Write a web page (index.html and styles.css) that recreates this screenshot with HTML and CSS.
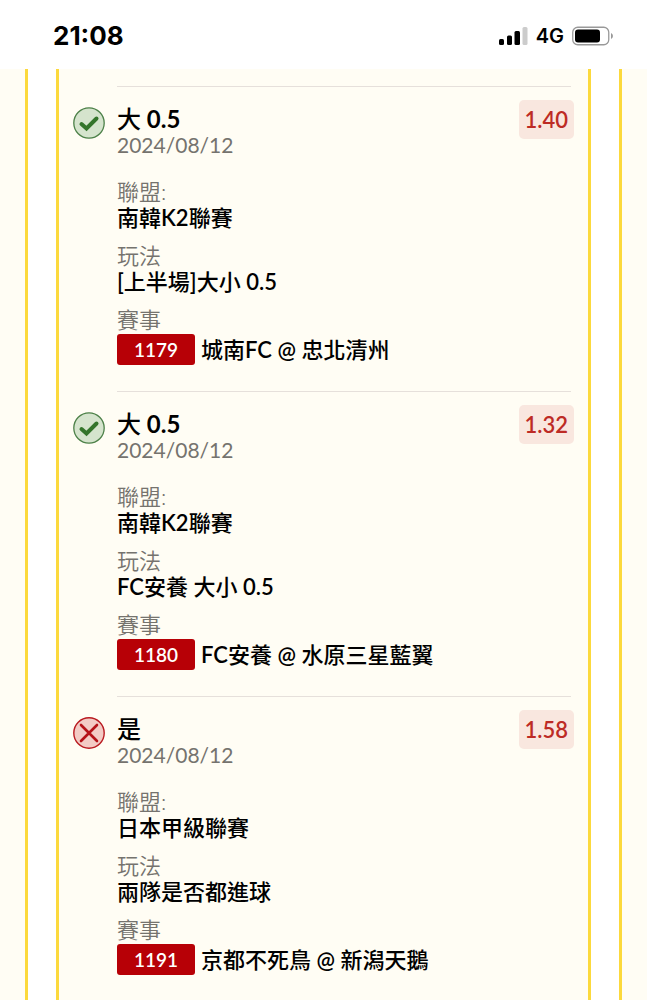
FILE: index.html
```
<!DOCTYPE html>
<html lang="zh-Hant">
<head>
    <meta charset="UTF-8">
    <meta name="viewport" content="width=device-width, initial-scale=1.0">
    <title>投注紀錄</title>
    <link rel="stylesheet" href="styles.css">
</head>
<body>
    <header class="status-bar">
        <span class="clock">21:08</span>
        <div class="status-icons">
            <svg class="signal" viewBox="0 0 29 18" aria-hidden="true">
                <rect x="0" y="12" width="5" height="6" rx="1.5"/>
                <rect x="8" y="8.5" width="5" height="9.5" rx="1.5"/>
                <rect x="15.5" y="4" width="5.5" height="14" rx="1.5"/>
                <rect x="23.5" y="0" width="5" height="18" rx="1.5" fill="#ccc"/>
            </svg>
            <span class="network">4G</span>
            <svg class="battery" viewBox="0 0 41 20" aria-hidden="true">
                <rect x="0.75" y="1.25" width="36" height="17.5" rx="5" fill="none" stroke="#999" stroke-width="1.3"/>
                <rect x="3" y="3.5" width="25" height="13" rx="3"/>
                <path d="M39 7 Q41 8 41 10 Q41 12 39 13 Z" fill="#999"/>
            </svg>
        </div>
    </header>

    <div class="page">
        <div class="outer-card">
            <main class="slip">
                <article class="bet">
                    <svg class="result" viewBox="0 0 32 32" role="img" aria-label="贏">
                        <circle cx="16" cy="16" r="15.2" fill="#d5e4cd" stroke="#4c8048" stroke-width="1.3"/>
                        <path d="M8.5 17 L13.5 21.5 L23.5 11.5" fill="none" stroke="#34752b" stroke-width="4" stroke-linecap="round" stroke-linejoin="miter"/>
                    </svg>
                    <div class="bet-body">
                        <div class="bet-head">
                            <div>
                                <h2>大<b> 0.5</b></h2>
                                <time datetime="2024-08-12">2024/08/12</time>
                            </div>
                            <span class="odds">1.40</span>
                        </div>
                        <dl>
                            <div class="field"><dt>聯盟:</dt><dd>南韓<b>K2</b>聯賽</dd></div>
                            <div class="field"><dt>玩法</dt><dd><b>[</b>上半場<b>]</b>大小<b> 0.5</b></dd></div>
                            <div class="field"><dt>賽事</dt><dd class="match"><span class="match-no">1179</span><span>城南<b>FC @ </b>忠北清州</span></dd></div>
                        </dl>
                    </div>
                </article>

                <article class="bet">
                    <svg class="result" viewBox="0 0 32 32" role="img" aria-label="贏">
                        <circle cx="16" cy="16" r="15.2" fill="#d5e4cd" stroke="#4c8048" stroke-width="1.3"/>
                        <path d="M8.5 17 L13.5 21.5 L23.5 11.5" fill="none" stroke="#34752b" stroke-width="4" stroke-linecap="round" stroke-linejoin="miter"/>
                    </svg>
                    <div class="bet-body">
                        <div class="bet-head">
                            <div>
                                <h2>大<b> 0.5</b></h2>
                                <time datetime="2024-08-12">2024/08/12</time>
                            </div>
                            <span class="odds">1.32</span>
                        </div>
                        <dl>
                            <div class="field"><dt>聯盟:</dt><dd>南韓<b>K2</b>聯賽</dd></div>
                            <div class="field"><dt>玩法</dt><dd><b>FC</b>安養 大小<b> 0.5</b></dd></div>
                            <div class="field"><dt>賽事</dt><dd class="match"><span class="match-no">1180</span><span><b>FC</b>安養<b> @ </b>水原三星藍翼</span></dd></div>
                        </dl>
                    </div>
                </article>

                <article class="bet">
                    <svg class="result" viewBox="0 0 32 32" role="img" aria-label="輸">
                        <circle cx="16" cy="16" r="15.2" fill="#f3cbc5" stroke="#b91a20" stroke-width="1.4"/>
                        <path d="M8 8 L24 24 M24 8 L8 24" fill="none" stroke="#b51218" stroke-width="2.6" stroke-linecap="round"/>
                    </svg>
                    <div class="bet-body">
                        <div class="bet-head">
                            <div>
                                <h2>是</h2>
                                <time datetime="2024-08-12">2024/08/12</time>
                            </div>
                            <span class="odds">1.58</span>
                        </div>
                        <dl>
                            <div class="field"><dt>聯盟:</dt><dd>日本甲級聯賽</dd></div>
                            <div class="field"><dt>玩法</dt><dd>兩隊是否都進球</dd></div>
                            <div class="field"><dt>賽事</dt><dd class="match"><span class="match-no">1191</span><span>京都不死鳥<b> @ </b>新潟天鵝</span></dd></div>
                        </dl>
                    </div>
                </article>
            </main>
        </div>
    </div>
</body>
</html>
```
FILE: styles.css
```
* {
    box-sizing: border-box;
}
body {
    margin: 0;
    min-height: 100vh;
    display: flex;
    flex-direction: column;
    background: #fff;
    color: #000;
    font-family: Lato, "Noto Sans CJK TC", sans-serif;
    font-size: 22px;
    line-height: 26px;
}
.status-bar {
    display: flex;
    align-items: center;
    justify-content: space-between;
    height: 69px;
    padding: 2px 34px 0 53px;
    font-family: Inter, sans-serif;
}
.clock {
    font-size: 26px;
    font-weight: 700;
}
.status-icons {
    display: flex;
    align-items: center;
    gap: 8px;
}
.signal {
    width: 29px;
    height: 18px;
}
.network {
    font-size: 20px;
    font-weight: 600;
}
.battery {
    width: 41px;
    height: 20px;
}
.page {
    flex: 1;
    display: flex;
    padding: 0 25px;
    background: #fffdf4;
}
.outer-card {
    flex: 1;
    display: flex;
    padding: 0 28px;
    background: #fff;
    border: solid #fcd93c;
    border-width: 0 3px;
}
.slip {
    flex: 1;
    padding: 17px 17px 0 14px;
    background: #fffdf4;
    border: solid #fcd93c;
    border-width: 0 3px;
}
.bet {
    display: flex;
    gap: 12px;
}
.result {
    flex: none;
    width: 32px;
    height: 32px;
    margin-top: 21px;
}
.bet-body {
    flex: 1;
    padding: 19px 0 26px;
    border-top: 1px solid #e6e0db;
}
.bet:last-child .bet-body {
    padding-bottom: 24px;
}
.bet-head {
    display: flex;
    justify-content: space-between;
    align-items: flex-start;
    margin-bottom: 21px;
}
h2 {
    margin: 0;
    font-size: 24px;
    font-weight: 500;
    line-height: 26px;
}
/* Latin runs, one step heavier than the Chinese around them */
b {
    font-weight: 600;
}
h2 b {
    font-weight: 700;
}
time {
    display: block;
    color: #75736e;
    font-size: 21px;
}
.odds {
    margin: -6px -3px 0 0;
    padding: 7px 6px 6px;
    border-radius: 5px;
    background: #f9e7df;
    color: #bd2b25;
    font-weight: 600;
}
dl {
    display: grid;
    gap: 12px;
    margin: 0;
}
dt {
    color: #75736e;
    font-weight: 350;
}
dd {
    margin: 0;
    font-weight: 500;
}
.match {
    display: flex;
    align-items: center;
    gap: 6px;
    padding-top: 1px;
    min-height: 32px;
}
.match-no {
    width: 78px;
    border-radius: 3px;
    background: #b70006;
    color: #fff;
    font-size: 19px;
    font-weight: 600;
    line-height: 31px;
    text-align: center;
}
```
